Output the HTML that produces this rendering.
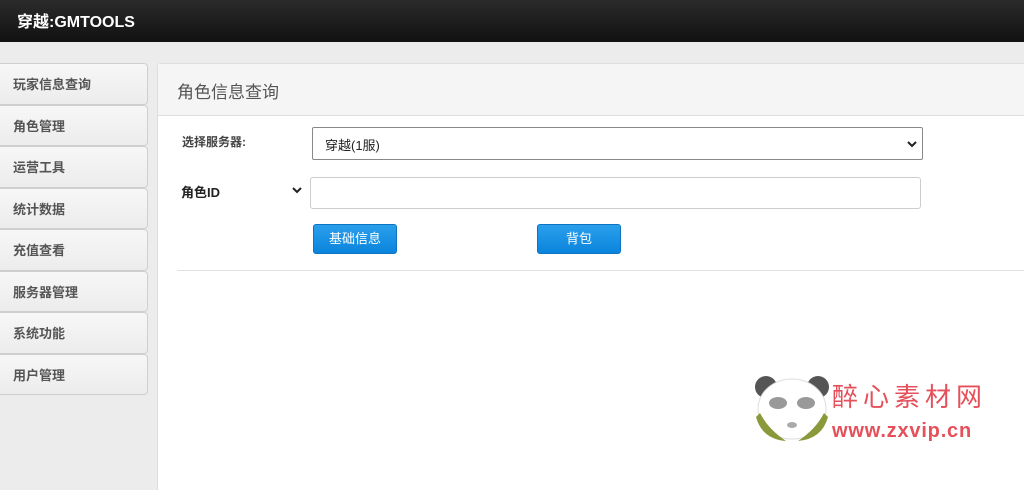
<!DOCTYPE html>
<html><head><meta charset="utf-8"><style>
*{margin:0;padding:0;box-sizing:border-box}
html{width:1024px;height:490px;overflow:hidden}
body{width:1024px;height:490px;overflow:hidden;background:#ececec;font-family:"Liberation Sans","Noto Sans CJK SC",sans-serif;position:relative}
.hd{position:absolute;left:0;top:0;width:1024px;height:42px;background:linear-gradient(#2b2b2b,#111);color:#fff;font-size:16px;font-weight:bold;padding:8px 0 0 17px}
.nav{position:absolute;left:0;top:63px;width:148px}
.nav div{height:41.5px;border:1px solid #cfcfcf;border-left:none;border-radius:0 4px 4px 0;background:linear-gradient(#f7f7f7,#ececec);font-size:13px;font-weight:bold;color:#555;padding:10px 0 0 13px}
.panel{position:absolute;left:157px;top:63px;width:867px;height:427px;background:#fff;border:1px solid #ddd;border-right:none;border-bottom:none;border-radius:4px 0 0 0}
.ph{height:52px;background:#f5f5f5;border-bottom:1px solid #ddd;font-size:17px;color:#555;padding:14px 0 0 19px}
.abs{position:absolute}
.sel{left:312px;top:127px;width:611px;height:33px;border:1px solid #888;border-radius:2px;background:#fff;font-size:13px;padding:7px 0 0 12px;color:#222}
.inp{left:310px;top:177px;width:611px;height:32px;border:1px solid #ccc;border-radius:3px;background:#fff}
.btn{height:30px;width:84px;background:linear-gradient(#2aa0ec,#0a84dc);border:1px solid #0d74c2;border-radius:3px;color:#fff;font-size:13px;text-align:center;line-height:28px}
</style></head><body>
<div class="hd">穿越:GMTOOLS</div>
<div class="nav"><div>玩家信息查询</div><div>角色管理</div><div>运营工具</div><div>统计数据</div><div>充值查看</div><div>服务器管理</div><div>系统功能</div><div>用户管理</div></div>
<div class="panel"><div class="ph">角色信息查询</div></div>
<div class="abs" style="left:182px;top:133px;font-size:12px;color:#444;font-weight:bold">选择服务器:</div>
<div class="abs sel">穿越(1服)</div>
<svg class="abs" style="left:907px;top:140px" width="10" height="8"><path d="M1 2l4 4 4-4" stroke="#222" stroke-width="2" fill="none"/></svg>
<div class="abs" style="left:181px;top:182px;font-size:13px;font-weight:bold;color:#222">角色ID</div>
<svg class="abs" style="left:292px;top:186px" width="10" height="8"><path d="M1 2l4 4 4-4" stroke="#222" stroke-width="2" fill="none"/></svg>
<div class="abs inp"></div>
<div class="abs btn" style="left:313px;top:224px">基础信息</div>
<div class="abs btn" style="left:537px;top:224px">背包</div>
<div class="abs" style="left:177px;top:270px;width:847px;height:1px;background:#e2e2e2"></div>
<svg class="abs" style="left:752px;top:373px" width="80" height="72">
<circle cx="14" cy="14" r="11" fill="#555"/><circle cx="66" cy="14" r="11" fill="#555"/>
<ellipse cx="40" cy="36" rx="34" ry="30" fill="#fff" stroke="#ddd"/>
<ellipse cx="26" cy="30" rx="9" ry="6" fill="#999"/><ellipse cx="54" cy="30" rx="9" ry="6" fill="#999"/>
<path d="M4 44 Q10 66 34 68 Q16 56 8 40Z" fill="#8a9a3a"/><path d="M76 44 Q70 66 46 68 Q64 56 72 40Z" fill="#8a9a3a"/>
<ellipse cx="40" cy="52" rx="5" ry="3" fill="#aaa"/></svg>
<div class="abs" style="left:832px;top:377px;font-size:26px;color:#e5505a;letter-spacing:5px;font-family:'Noto Sans CJK SC',sans-serif">醉心素材网</div>
<div class="abs" style="left:832px;top:420px;font-size:20px;color:#e5505a;font-family:'Liberation Sans',sans-serif;font-weight:bold;letter-spacing:0.8px">www.zxvip.cn</div>
</body></html>
